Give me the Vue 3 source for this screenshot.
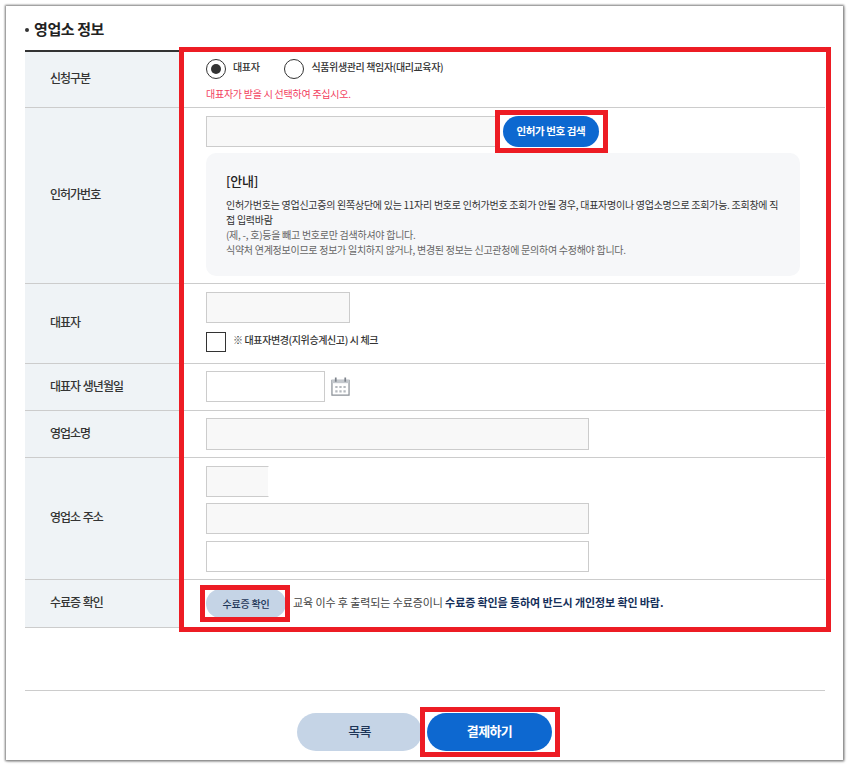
<script setup>
const noteLines = [
  { text: '인허가번호는 영업신고증의 왼쪽상단에 있는 11자리 번호로 인허가번호 조회가 안될 경우, 대표자명이나 영업소명으로 조회가능. 조회창에 직접 입력바람', dark: true },
  { text: '(제, -, 호)등을 빼고 번호로만 검색하셔야 합니다.', dark: false },
  { text: '식약처 연계정보이므로 정보가 일치하지 않거나, 변경된 정보는 신고관청에 문의하여 수정해야 합니다.', dark: false }
]
</script>

<template>
  <div class="shot">
    <main class="window">
      <h2 class="title"><span class="dot"></span>영업소 정보</h2>
      <section class="table">
        <div class="row r1">
          <div class="th">신청구분</div>
          <div class="td">
            <div class="radios">
              <span class="radio on"><i></i></span><span class="rlabel">대표자</span>
              <span class="radio second"></span><span class="rlabel">식품위생관리 책임자(대리교육자)</span>
            </div>
            <p class="warn">대표자가 받을 시 선택하여 주십시오.</p>
          </div>
        </div>
        <div class="row r2">
          <div class="th">인허가번호</div>
          <div class="td">
            <div class="inline">
              <div class="input grey w-license"></div>
              <button class="pill blue search">인허가 번호 검색</button>
            </div>
            <div class="note">
              <h3>[안내]</h3>
              <p v-for="line in noteLines" :key="line.text" :class="{ dark: line.dark }">{{ line.text }}</p>
            </div>
          </div>
        </div>
        <div class="row r3">
          <div class="th">대표자</div>
          <div class="td">
            <div class="input grey w-name"></div>
            <div class="check-line">
              <span class="check"></span>
              <span class="rlabel">※ 대표자변경(지위승계신고) 시 체크</span>
            </div>
          </div>
        </div>
        <div class="row r4">
          <div class="th">대표자 생년월일</div>
          <div class="td date-line">
            <div class="input w-date"></div>
            <svg class="cal" viewBox="0 0 20 20" width="19" height="19" fill="none">
              <path d="M1 3.5h18v15.5h-18z" stroke="#8a9097" stroke-width="1.3" />
              <path d="M1 3h18v3.5h-18z" fill="#c4c8cd" />
              <path d="M5 .5v4.500M15 .5v4.500" stroke="#7d838b" stroke-width="1.8" />
              <path d="M4.500 9.500h2.400v2.200H4.500zM8.800 9.500h2.400v2.200H8.800zM13.100 9.500h2.400v2.200h-2.400zM4.500 14h2.400v2.200H4.500zM8.800 14h2.400v2.200H8.800zM13.100 14h2.400v2.200h-2.400z" fill="#b5b9be" />
            </svg>
          </div>
        </div>
        <div class="row r5">
          <div class="th">영업소명</div>
          <div class="td">
            <div class="input grey w-full tall"></div>
          </div>
        </div>
        <div class="row r6">
          <div class="th">영업소 주소</div>
          <div class="td stack">
            <div class="input grey w-zip"></div>
            <div class="input grey w-full"></div>
            <div class="input w-full"></div>
          </div>
        </div>
        <div class="row r7">
          <div class="th">수료증 확인</div>
          <div class="td cert-line">
            <button class="pill pale cert">수료증 확인</button>
            <span class="cert-text">교육 이수 후 출력되는 수료증이니 <b>수료증 확인을 통하여 반드시 개인정보 확인 바람.</b></span>
          </div>
        </div>
      </section>
      <div class="actions">
        <button class="pill pale big">목록</button>
        <button class="pill blue big">결제하기</button>
      </div>
      <div class="mark mark-main"></div>
      <div class="mark mark-search"></div>
      <div class="mark mark-cert"></div>
      <div class="mark mark-pay"></div>
    </main>
  </div>
</template>

<style>
html, body { margin: 0; background: #fff; }
</style>

<style scoped>
.shot {
  width: 849px;
  height: 766px;
  overflow: hidden;
  padding: 6px;
  box-sizing: border-box;
  background: #fff;
  font-family: "Noto Sans CJK KR", "Noto Sans", sans-serif;
  color: #222;
}
.window {
  position: relative;
  width: 837px;
  height: 754px;
  box-sizing: border-box;
  padding: 0 18px 0 19px;
  background: #fff;
  box-shadow: 0 0 2px 1px #808080, 1px 1px 3px #a0a0a0;
}
.title {
  margin: 0;
  height: 44px;
  display: flex;
  align-items: center;
  font-size: 15px;
  font-weight: 700;
  letter-spacing: -0.4px;
  color: #222;
  box-sizing: border-box;
}
.dot {
  width: 4px;
  height: 4px;
  border-radius: 50%;
  background: #333;
  margin: 3px 5px 0 0;
}
.table { border-top: 2px solid #333; }
.row {
  display: grid;
  grid-template-columns: 155px 1fr;
  border-bottom: 1px solid #ccc;
  box-sizing: border-box;
}
.r1 { height: 56px; }
.r2 { height: 176px; }
.r3 { height: 80px; }
.r4 { height: 47px; }
.r5 { height: 47px; }
.r6 { height: 122px; }
.r7 { height: 48px; }
.th {
  background: #eff3f6;
  display: flex;
  align-items: center;
  padding: 0 0 4px 25px;
  font-size: 12px;
  font-weight: 500;
  letter-spacing: -1px;
  word-spacing: 1px;
  color: #333;
}
.td { padding: 8px 25px 0 26px; min-width: 0; }
.radios {
  display: flex;
  align-items: center;
  height: 20px;
  margin-top: -1px;
}
.radio {
  width: 20px;
  height: 20px;
  box-sizing: border-box;
  border: 1px solid #333;
  border-radius: 50%;
  background: #fff;
  display: flex;
  align-items: center;
  justify-content: center;
  flex: none;
}
.radio i { width: 10px; height: 10px; border-radius: 50%; background: #333; }
.radio.second { margin-left: 25px; }
.rlabel {
  font-size: 10px;
  color: #333;
  margin-left: 7px;
  letter-spacing: -0.38px;
  font-weight: 500;
  margin-top: -5px;
}
.warn {
  margin: 8px 0 0;
  font-size: 10px;
  line-height: 14px;
  letter-spacing: -0.25px;
  color: #f2425f;
}
.inline { display: flex; }
.input {
  height: 31px;
  box-sizing: border-box;
  border: 1px solid #ccc;
  background: #fff;
}
.input.tall { height: 32px; }
.input.grey { background: #f8f8f8; }
.w-license { width: 292px; }
.w-name { width: 144px; }
.w-date { width: 119px; }
.w-full { width: 383px; }
.w-zip { width: 63px; border-right-color: #fff; }
.pill {
  border: 0;
  padding: 0 0 3px;
  border-radius: 999px;
  font-family: inherit;
  font-weight: 500;
  display: block;
}
.blue { background: #0d68d0; color: #fff; font-weight: 700; }
.pale { background: #c5d4e6; color: #1d3557; }
.search {
  width: 96px;
  height: 31px;
  margin-left: 5px;
  font-size: 10.5px;
  letter-spacing: -0.4px;
}
.note {
  margin-top: 6px;
  width: 594px;
  height: 123px;
  box-sizing: border-box;
  border-radius: 10px;
  background: #f6f7f9;
  padding: 19px 20px 0;
}
.note h3 {
  margin: 0 0 7px;
  font-size: 13px;
  line-height: 18px;
  font-weight: 500;
  letter-spacing: -0.3px;
  color: #222;
}
.note p {
  margin: 0;
  font-size: 10px;
  line-height: 15px;
  letter-spacing: -0.27px;
  color: #666;
}
.note p.dark { color: #333; }
.check-line { display: flex; align-items: center; margin-top: 9px; }
.check {
  width: 20px;
  height: 20px;
  box-sizing: border-box;
  border: 1px solid #333;
  background: #fff;
  flex: none;
}
.date-line { display: flex; align-items: flex-start; }
.date-line .cal { margin: 6px 0 0 6px; }
.r4 .td { padding-top: 7px; }
.r5 .td { padding-top: 7px; }
.stack { display: flex; flex-direction: column; gap: 6px; }
.stack .input:nth-child(3) { margin-top: 1px; }
.cert-line { display: flex; align-items: center; padding-top: 0; }
.cert {
  width: 80px;
  height: 29px;
  font-size: 10px;
  letter-spacing: -0.2px;
  flex: none;
  padding: 0;
}
.cert-text {
  margin: -3px 0 0 7px;
  font-size: 11px;
  letter-spacing: -0.1px;
  color: #444;
  white-space: nowrap;
}
.cert-text b { font-weight: 700; color: #16305a; }
.actions {
  margin-top: 62px;
  border-top: 1px solid #ccc;
  padding: 22px 1px 0 0;
  display: flex;
  justify-content: center;
  gap: 5px;
}
.big {
  width: 125px;
  height: 38px;
  font-size: 13px;
  letter-spacing: -0.6px;
}
.mark {
  position: absolute;
  border: 5px solid #ed1c24;
  box-sizing: border-box;
  pointer-events: none;
}
.mark-main { left: 173px; top: 41px; width: 652px; height: 585px; }
.mark-search { left: 489px; top: 104px; width: 113px; height: 43px; }
.mark-cert { left: 194px; top: 579px; width: 90px; height: 37px; }
.mark-pay { left: 414px; top: 701px; width: 140px; height: 50px; }
</style>
